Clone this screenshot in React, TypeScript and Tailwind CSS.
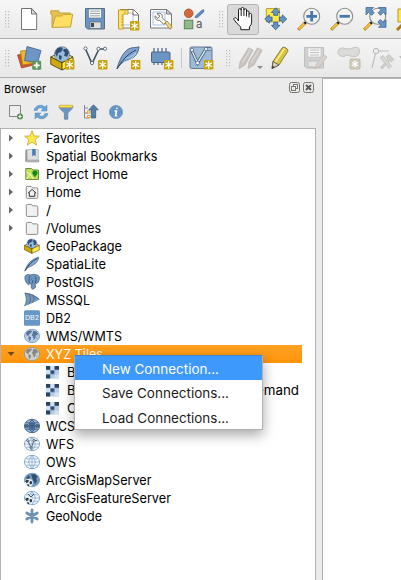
import React from "react";

type Kids = { children?: React.ReactNode };

function Tool({ children, className = "" }: Kids & { className?: string }) {
  return (
    <svg viewBox="0 0 24 24" className={`block h-6 w-6 shrink-0 overflow-visible ${className}`}>
      {children}
    </svg>
  );
}

function Small({ children, className = "" }: Kids & { className?: string }) {
  return (
    <svg viewBox="0 0 16 16" className={`block h-4 w-4 shrink-0 overflow-visible ${className}`} fill="none">
      {children}
    </svg>
  );
}

function Handle({ className = "" }: { className?: string }) {
  return (
    <svg viewBox="0 0 5 17" className={`h-[17px] w-[5px] shrink-0 ${className}`} fill="#bdbdbd">
      {[0, 3, 6, 9, 12, 15].map((y) => (
        <g key={y}>
          <rect x="0" y={y} width="1.2" height="1.3" />
          <rect x="3" y={y} width="1.2" height="1.3" />
        </g>
      ))}
    </svg>
  );
}

function NewBadge({ x, y }: { x: number; y: number }) {
  return (
    <g transform={`translate(${x} ${y})`}>
      <rect width="9.4" height="9.6" rx="1.2" fill="#c8a20a" />
      <path d="M4.7 1.4v6.8M1.8 3.1l5.8 3.4M7.6 3.1l-5.8 3.4" stroke="#fff" strokeWidth="1.2" strokeLinecap="round" />
    </g>
  );
}

function Magnifier({ children }: Kids) {
  return (
    <>
      <path d="M8 16 1.2 22.8" stroke="#a87b13" strokeWidth="3" />
      <path d="M7.6 16.4 1.8 22.2" stroke="#fcc93a" strokeWidth="1.7" />
      <path d="m7.4 16.6 1.8-1.8" stroke="#222" strokeWidth="2.6" />
      <circle cx="14.7" cy="9.3" r="8" fill="#f3f3f2" stroke="#8b8b88" strokeWidth="1.1" />
      {children}
    </>
  );
}

function Feather() {
  return (
    <>
      <path d="M1 22.5C3 15 7 6 13 2.7 17 1 20 2 23 .8c-.4 5-3 9.6-7.4 11.7-4 2-7.2 1.7-10.5 5.3z" fill="#7fa4cf" stroke="#34536e" strokeWidth=".8" />
      <path d="M1 23C5 16 11 8 20 4" fill="none" stroke="#29455e" strokeWidth="1" />
      <path d="M8 15.5c4-.5 9-3 12-8M10 12.5c4-1 7-3 10-6" fill="none" stroke="#c1d6ec" strokeWidth=".8" />
    </>
  );
}

function ThinFeather() {
  return (
    <>
      <path d="M1 14.8C2.4 9.5 6 3.5 14.8 1.2 14.4 6 10 9.4 4 11.4z" fill="#7fa4cf" stroke="#48698a" strokeWidth=".7" />
      <path d="M.8 15.2C3.6 9.6 8 5 13.6 2.2" stroke="#2b445c" strokeWidth=".9" />
    </>
  );
}

function Package() {
  return (
    <>
      <path d="M.8 11 12 5.6 23 11 12 17z" fill="#f9ec75" stroke="#4d4414" strokeWidth=".9" />
      <circle cx="12" cy="8.3" r="7.6" fill="#9abbdd" stroke="#466583" strokeWidth=".6" />
      <path d="M7 2.5 11 1l2 2-2 3-3 1-1 4-2-4zM14 3l3-.2 2 4-2 4-3-1 1-3-2-2zM9 9l3 1-1 4-2-1z" fill="#304e72" />
      <path d="m.8 11 11.2 5.8V24L.8 18.3z" fill="#d2a90a" stroke="#4d4414" strokeWidth=".9" />
      <path d="M12 16.8 23 11v7.5L12 24z" fill="#fbed46" stroke="#4d4414" strokeWidth=".9" />
    </>
  );
}

function Folder() {
  return (
    <path d="M2.3 13.4V3.4q0-1 1-1h4l1.4 1.5h4.1q1 0 1 1v8.5q0 1-1 1H3.3q-1 0-1-1z" fill="#f1f1f1" stroke="#8c8c8c" />
  );
}

type GlobeKind = "land" | "grey" | "dark" | "wfs" | "grid" | "arcmap" | "arcfeat";

function Globe({ kind }: { kind: GlobeKind }) {
  const land = kind === "land" || kind === "grey";
  const fill =
    kind === "grey" ? "#cfcfcb" : kind === "land" ? "#b4cce4" : kind === "dark" ? "#9bbce0" : kind === "arcmap" ? "#739ac5" : "#f6faff";
  const line = kind === "grey" ? "#8f918a" : kind === "dark" ? "#3a567a" : "#6c98c5";
  return (
    <>
      <ellipse cx="8" cy="8" rx="7.6" ry="6.7" fill={fill} stroke={line} strokeWidth=".8" />
      {land && (
        <g fill={kind === "grey" ? "#858984" : "#55759a"}>
          <path d="M2 5 4 3l3-.5 1 1.2L6.6 5 5.2 6.2 4.4 8 2.6 7.3zM4.4 8.2l2.7 1-.5 2.2-1 1.8-1-2zM9 3l3 .3 2 2.1-.8 2-1.3-.7-.6 3.2-1.3 2-1-3.2L7.8 7l1-1.5zM12.5 9l1.2 1-1 1z" />
        </g>
      )}
      {!land && kind !== "arcmap" && (
        <path
          d="M.6 8h14.8M2 4.8h12M2 11.2h12M8 1.4v13.2M8 1.4Q1.4 8 8 14.6M8 1.4Q14.6 8 8 14.6"
          stroke={line}
          strokeWidth="0.8"
          opacity={kind === "dark" ? 1 : 0.8}
        />
      )}
      {kind === "dark" && <path d="M5 5h6v6H5zM1 6h3v4H1zM12 6h3v4h-3z" fill="#2f4e76" opacity=".65" />}
      {kind === "wfs" && (
        <g stroke="#4f5c68" strokeWidth=".9" fill="#fff">
          <path d="m4 5 3.4 7 2.5-7.5H13" fill="none" />
          <circle cx="3.7" cy="4.6" r="1" />
          <circle cx="10" cy="4.4" r="1" />
          <circle cx="7.2" cy="12" r="1" />
        </g>
      )}
      {kind === "arcmap" && <path d="M7 2.5 11 2l3 3-2 1 1 3-2 3-2-4zM2 6l3-3 1 3-2 2z" fill="#34506f" />}
      {(kind === "arcmap" || kind === "arcfeat") && (
        <>
          <circle cx="4.8" cy="10.8" r="4" fill="#e4edf5" />
          <path d="m1 9 2-1.2 2 .8-1 2-1.6.4zM6 9l2 .5v2l-1.5 1-1-1.6zM3 12l2 .4.4 2-1.7-.5z" fill="#273746" />
          {kind === "arcfeat" && <path d="m4 4 3 3 3-3" stroke="#4f5c68" />}
        </>
      )}
    </>
  );
}

const rows: { label: string; width: number; arrow?: boolean; icon: React.ReactNode }[] = [
  { label: "Favorites", width: 54, arrow: true, icon: <path d="m8 .8 2 5.1 5.4.3-4.2 3.5 1.4 5.4L8 12.1l-4.7 3 1.5-5.4L.6 6.2 6 5.9z" fill="#fbe750" stroke="#c9a91b" strokeWidth=".8" /> },
  {
    label: "Spatial Bookmarks", width: 111.5, arrow: true,
    icon: (
      <>
        <path d="M1.3 2.3 3 1.2V14l-1.7-1z" fill="#969696" />
        <path d="M3.3 1.5h11v11.7h-11z" fill="#e0e1e2" stroke="#aaa" strokeWidth=".7" />
        <path d="M1.3 13 3 14h11.8v-2H3z" fill="#bbb" stroke="#888" strokeWidth=".5" />
        <path d="M8.2 1h3.5v7.6L10 7 8.2 8.6z" fill="#497eb3" />
      </>
    ),
  },
  {
    label: "Project Home", width: 82, arrow: true,
    icon: (
      <>
        <path d="M1.8 2.5h5.7L9 4h5.5v9.5H1.8z" fill="#bee15a" stroke="#71883e" />
        <path d="m2.3 6 4 2 3 5M2.3 13l4-5" stroke="#fff8c0" />
        <path d="M11 11.5c-1-2-3.4-3.6-2.6-5.4.9-2.2 4.4-2.2 5.2 0 .6 1.8-1.7 3.4-2.6 5.4z" fill="#118a21" />
      </>
    ),
  },
  {
    label: "Home", width: 35, arrow: true,
    icon: (
      <>
        <Folder />
        <path d="m4 9.2 4.1-3.8 4 3.8M5.3 8.6v3.7h5.5V8.6" stroke="#303030" />
      </>
    ),
  },
  { label: "/", width: 5, arrow: true, icon: <Folder /> },
  { label: "/Volumes", width: 55, arrow: true, icon: <Folder /> },
  { label: "GeoPackage", width: 76, icon: <g transform="translate(0 .5) scale(.665 .62)"><Package /></g> },
  { label: "SpatiaLite", width: 60, icon: <ThinFeather /> },
  {
    label: "PostGIS", width: 48,
    icon: (
      <>
        <path d="M1 3C2-.2 5 .4 6.5 1 9-.2 14 .2 15.3 3c.7 2-.8 5.4-2.3 6.5l-1.7-.7.1 4.7-2.4 1.8-1.7-1.2V10L5.7 9.5 4.6 11C2 9 .4 5.6 1 3z" fill="#6c96c0" stroke="#48627d" strokeWidth=".8" />
        <path d="M6.5 1.3C4.6 3 5 6 5.3 9M10.7 2c2 2 1.3 5.1.6 7M7 5l1 .2M7.5 9.8l1.3-1.2V6" stroke="#34516d" strokeWidth=".8" />
      </>
    ),
  },
  {
    label: "MSSQL", width: 44,
    icon: (
      <>
        <path d="M.8.8Q10 1 15.6 7.5 9 11 .5 14.2 4 8 .8.8z" fill="#7298be" />
        <path d="M.8.8Q4 8 .5 14.2M4.8 1.8Q8.5 7 4.5 12.5M9 3.4q2.5 3.7-.6 7.2M1 1Q9 2 15.4 7.4" stroke="#52677b" strokeWidth=".8" />
      </>
    ),
  },
  {
    label: "DB2", width: 25,
    icon: (
      <>
        <rect x="0" y=".3" width="16" height="15.4" rx="1.5" fill="#6797c7" />
        <text x="1" y="10.1" textLength="14" lengthAdjust="spacingAndGlyphs" fontSize="5.6" fontFamily="Inter, sans-serif" fill="#fff">DB2</text>
      </>
    ),
  },
  { label: "WMS/WMTS", width: 76, icon: <Globe kind="land" /> },
];

const lower: { label: string; width: number; icon: React.ReactNode }[] = [
  { label: "WCS", width: 29, icon: <Globe kind="dark" /> },
  { label: "WFS", width: 28, icon: <Globe kind="wfs" /> },
  { label: "OWS", width: 30, icon: <Globe kind="grid" /> },
  { label: "ArcGisMapServer", width: 105.5, icon: <Globe kind="arcmap" /> },
  { label: "ArcGisFeatureServer", width: 125, icon: <Globe kind="arcfeat" /> },
  { label: "GeoNode", width: 56, icon: <path d="M8 2v12M2.8 5l10.4 6M13.2 5 2.8 11" stroke="#6c91b4" strokeWidth="2.8" strokeLinecap="round" /> },
];

function Label({ text, width, color = "#000" }: { text: string; width: number; color?: string }) {
  return (
    <svg className="block h-[18px] shrink-0 overflow-visible" width={width} height="18">
      <text x="0" y="13.6" textLength={width} lengthAdjust="spacingAndGlyphs" fontSize="13" fontFamily="Inter, 'Liberation Sans', sans-serif" fill={color}>
        {text}
      </text>
    </svg>
  );
}

function TreeRow({ label, width, arrow, icon }: { label: string; width: number; arrow?: boolean; icon: React.ReactNode }) {
  return (
    <div className="flex h-[18px] items-center pl-[7px]">
      <svg className="mr-[10px] h-2 w-[6px] shrink-0" viewBox="0 0 6 8">{arrow && <path d="M1 .5v7L5 4z" fill="#686868" />}</svg>
      <Small className="mr-[6px]">{icon}</Small>
      <Label text={label} width={width} />
    </div>
  );
}

function TileRow({ label, width, children }: Kids & { label: string; width: number }) {
  return (
    <div className="flex h-[18px] items-center pl-[44px]">
      <Small className="mr-[6px]">
        <path d="M1 2h13v12.5H1z" fill="#b4cbe6" />
        <path d="M5 2h4.5v4H5zM1 6h4v4H1zM9.5 10.5H14v4H9.5z" fill="#d4e0ef" />
        <path d="M5.2 6h4.4v4.4H5.2z" fill="#6088b4" />
        <path d="M1 2h4.2v3.8H1zM9.6 2H14v3.8H9.6zM1 10.6h4.2v3.9H1zM6.2 7h2.5v2.5H6.2z" fill="#2b435c" />
      </Small>
      <Label text={label} width={width} />
      {children}
    </div>
  );
}

function FileToolbar() {
  return (
    <div className="flex h-[39px] shrink-0 items-center overflow-hidden border-b border-[#aeaeae] bg-linear-to-b from-[#f7f7f7] to-[#e9e9e9]">
      <Handle className="ml-[5px]" />
      <Tool className="ml-[7px]">
        <path d="M4.5 1.5h10.2l5 5.5v15.5H4.5z" fill="#fff" stroke="#73736f" />
        <path d="M14.5 1.5V7h5z" fill="#ddd" stroke="#73736f" />
      </Tool>
      <Tool className="ml-[9px]">
        <path d="M2 20.5V7H.8V3.8h8V6h11.5v3" fill="#e7c34d" stroke="#c6a13c" />
        <path d="M2.2 20.5 5.5 9h6l2-1.7h9.2L20.5 20z" fill="#ffdf61" stroke="#c6a13c" />
      </Tool>
      <Tool className="ml-[9px]">
        <path d="M2.5 1.5h19V22h-17l-2-2z" fill="#6a95c3" stroke="#596f86" />
        <path d="M5.5 2h13v9h-13z" fill="#f6f6f4" stroke="#596f86" strokeWidth=".6" />
        <path d="M7 4.2h10M7 6.5h10M7 8.8h10" stroke="#91918c" strokeWidth=".8" />
        <path d="M7 15h11v6.5H7z" fill="#dededb" stroke="#50606c" strokeWidth=".6" />
        <path d="M8 16h3v4H8z" fill="#394a5b" />
      </Tool>
      <Tool className="ml-[10px]">
        <path d="M3.5 2.5h13l5 5V21h-18z" fill="#fff" stroke="#777" />
        <path d="M6 6h10v12H6" fill="none" stroke="#a9bfea" />
        <path d="M16 2.5V8h5" fill="none" stroke="#777" />
        <path d="M1.5 3H11v4H6v15H1.5z" fill="#ffe579" stroke="#c49e1b" />
        <path d="M4 9h2M4 12h2M4 15h2M4 18h2M8 4v2" stroke="#c49e1b" />
        <NewBadge x={13} y={14} />
      </Tool>
      <Tool className="ml-2">
        <path d="M1.5 2.5h16l5 4.5v14h-21z" fill="#fff" stroke="#777" />
        <path d="M4 5h12v13H4z" fill="#fbfdff" stroke="#aabfe8" />
        <path d="M17.5 2.5V7h5z" fill="#d5d5d2" stroke="#777" />
        <path d="M8 6.8c3-1.8 6 .6 5.3 4l4 4-2.6 2.6-4.1-4.1c-3 .5-5.1-1.8-4.5-4.5l2.6 2.5 2.3-2.2z" fill="#f4f4f1" stroke="#656560" strokeWidth=".9" />
        <path d="m16 16 2-2 5 5.4-2 3z" fill="#eed481" stroke="#9a7d30" strokeWidth=".8" />
      </Tool>
      <Tool className="ml-2">
        <circle cx="7.7" cy="6.3" r="4.3" fill="#d2683b" stroke="#a54a24" strokeWidth=".8" />
        <path d="m14.5 9 5.8-5.2Q22 2.2 23 3l-.3 1.9-5.8 5.3-2.7.5z" fill="#6390c0" stroke="#476889" strokeWidth=".7" />
        <rect x="3.3" y="13.2" width="8.5" height="8.6" fill="#91b98b" stroke="#557d52" strokeWidth=".9" />
        <text x="15" y="21.2" fontSize="11.5" fontFamily="Inter, sans-serif" fill="#555">a</text>
      </Tool>
      <Handle className="ml-[14px]" />
      <div className="ml-[3px] flex h-[31px] w-[32px] shrink-0 items-center justify-center rounded-[3px] border border-[#b4b4b4] bg-[#d9d9d9]">
        <Tool>
          <path d="M7.5 14V3.2q0-1.6 1.3-1.6T10.2 3v6-7.2Q10.2.5 11.5.5t1.4 1.3V9 3q0-1.2 1.3-1.2T15.5 3v6.5V5q0-1.1 1.2-1.1T18 5v5.5-3q0-1 1.3-1t1.3 1v7.7q0 2.7-2.2 4.7v2.8H9.8v-2.6L5.6 16 3 12.5q-.5-1.3.6-1.8 1-.4 1.9.6z" fill="#fff" />
          <path d="M7.5 14V3.2q0-1.6 1.3-1.6T10.2 3v6M10.2 3V1.8Q10.2.5 11.5.5t1.4 1.3V9M12.9 3q0-1.2 1.3-1.2T15.5 3v6.5M15.5 5q0-1.1 1.2-1.1T18 5v5.5M18 7.5q0-1 1.3-1t1.3 1v7.7q0 2.7-2.2 4.7v2.8H9.8v-2.6L5.6 16 3 12.5q-.5-1.3.6-1.8 1-.4 1.9.6l2 2.7" fill="none" stroke="#151515" strokeWidth=".95" strokeLinejoin="round" />
        </Tool>
      </div>
      <Tool className="ml-[5px]">
        <path d="M2.3 1.6h13v13.2h-13z" fill="#ffe84c" stroke="#a58717" strokeWidth=".8" />
        <path d="m11.7.8 4.3 4.7h-2.3v2.8h-4V5.5H7.4zM11.7 22.8l-4.3-4.5h2.3v-2.8h4v2.8H16zM.8 12l4.5-4.2v2.3h2.8v3.9H5.3v2.2zM22.8 12l-4.5-4.2v2.3h-2.8v3.9h2.8v2.2z" fill="#6795c6" stroke="#315d89" strokeWidth=".8" />
      </Tool>
      <Tool className="ml-[9px]"><Magnifier><path d="M14.7 4v10.6M9.4 9.3H20" stroke="#4479ad" strokeWidth="2.8" /></Magnifier></Tool>
      <Tool className="ml-[9px]"><Magnifier><path d="M9.5 9.3h10.4" stroke="#4479ad" strokeWidth="2.8" /></Magnifier></Tool>
      <Tool className="ml-[9px]">
        <Magnifier>
          <g fill="#6894c2" stroke="#345f89" strokeWidth=".7">
            <path d="M3 .5h7.5L8.2 2.8l3 3-2.5 2.5-3-3L3 8zM23 .5v7.5l-2.5-2.7-3 3L15 5.8l3-3L15.5.5zM23 20.3h-7.5l2.3-2.3-3-3 2.5-2.5 3 3 2.7-2.7z" />
          </g>
        </Magnifier>
      </Tool>
      <Tool className="ml-[9px]"><path d="M2 2h18v13H2z" fill="#ffe84c" stroke="#b29824" /><path d="m8 16-7 7" stroke="#a87b13" strokeWidth="3" /></Tool>
    </div>
  );
}

function LayerToolbar() {
  return (
    <div className="flex h-[39px] shrink-0 items-center overflow-hidden border-b border-[#aeaeae] bg-linear-to-b from-[#f5f5f5] to-[#e8e8e8]">
      <Handle className="ml-[5px]" />
      <Tool className="ml-[7px]">
        <path d="m.5 9 12-3 4 13-12 3z" fill="#cf582f" stroke="#934324" strokeWidth=".7" />
        <path d="m3.5 5 13-1 1 13-12 2z" fill="#edb82e" stroke="#a37512" strokeWidth=".7" />
        <path d="m10 .5 14 4-3.4 12.5-13-2.5z" fill="#6d96c6" stroke="#3f6286" strokeWidth=".8" />
        <rect x="15.2" y="14.8" width="9" height="9" rx="1.3" fill="#5d965b" />
        <path d="M19.7 16.3v6M16.7 19.3h6" stroke="#fff" strokeWidth="1.8" />
      </Tool>
      <Tool className="ml-[9px]"><Package /><NewBadge x={15} y={14} /></Tool>
      <Tool className="ml-[9px]">
        <path d="m2.5 3 6.5 14.5L16 3h5" stroke="#415466" strokeWidth="1.6" fill="none" />
        <g fill="#fff" stroke="#415466" strokeWidth=".8"><circle cx="2.5" cy="2.5" r="1.6" /><circle cx="9" cy="17" r="1.6" /><circle cx="15.5" cy="2.8" r="1.6" /><circle cx="22" cy="2.8" r="1.6" /></g>
        <NewBadge x={15} y={14} />
      </Tool>
      <Tool className="ml-[9px]"><Feather /><NewBadge x={15} y={14} /></Tool>
      <Tool className="ml-[9px]">
        <path d="M5 2v17M9 2v17M13 2v17M17 2v17" stroke="#446283" strokeWidth="1.2" />
        <rect x="2.5" y="6" width="18.5" height="10.5" rx="1" fill="#6a95c5" stroke="#486483" />
        <NewBadge x={15} y={14} />
      </Tool>
      <div className="ml-2 h-5 w-px shrink-0 bg-[#c7c7c7]" />
      <Tool className="ml-[7px]">
        <rect x="1" y="1" width="22" height="21.5" rx="1.5" fill="#9eb9d5" stroke="#667b91" />
        <path d="m3 5 5.5 12L17 3h5" stroke="#38526d" strokeWidth="3" fill="none" />
        <path d="m3 5 5.5 12L17 3h5" stroke="#d7e5f2" strokeWidth="1.5" fill="none" />
        <g fill="#fff" stroke="#49647d" strokeWidth=".7"><circle cx="3" cy="4" r="1.6" /><circle cx="8.5" cy="17" r="1.8" /><circle cx="17" cy="3" r="1.6" /></g>
        <NewBadge x={15} y={14} />
      </Tool>
      <Handle className="ml-[13px]" />
      <Tool className="ml-[8px]">
        <g fill="#c9c5c2" stroke="#b4b0ad" strokeWidth=".7">
          <path d="m0 22.5 1-6.5L9.5 1.8l4.6 2.4L6 19zM9 22.5l1-6.5 8.5-14.2 4.6 2.4L15 19z" />
          <path d="m3.2 17 8.2-13.5M12.2 17l8.2-13.5" stroke="#dedad7" strokeWidth="1.2" />
        </g>
        <path d="M18 20h6l-3 3z" fill="#8f8f8f" />
      </Tool>
      <Tool className="ml-[6px]">
        <path d="m3 22.5 1-7L13 2q1-1.5 3-.5l2 1.3q1.5 1.2.7 2.7L10 19z" fill="#d8c43d" stroke="#766b32" strokeWidth=".8" />
        <path d="M6.5 16l9-13.5" stroke="#fff08f" strokeWidth="1.4" />
        <path d="m4 15.5 6 3.5-7 3.5z" fill="#d7d3be" stroke="#4f4b3f" strokeWidth=".8" />
        <path d="M3.3 19.7 6 21.2 3 22.5z" fill="#363636" />
      </Tool>
      <Tool className="ml-[10px] opacity-40">
        <path d="M1.5 1.5h19V22h-17l-2-2z" fill="#a6a6a6" stroke="#777" />
        <path d="M5 2h13v9H5z" fill="#fff" stroke="#777" strokeWidth=".6" />
        <path d="M7 4h9M7 6.5h9M7 9h9M6 15h10v6H6" stroke="#777" fill="#ddd" />
        <path d="m12 23 2-6 7-8 3 2-7 9z" fill="#bda79a" stroke="#927d70" />
      </Tool>
      <Tool className="ml-[10px]">
        <path d="M2 3.5q3-3 7-.8 4.5 1.2 8-1.2 5-1 5.5 2.8 0 6.2-5.5 6.4-4-.4-7-1.7-3 2.6-7 .8Q-.6 6.8 2 3.5z" fill="#dbdcd9" stroke="#c3c4c0" />
        <rect x="13" y="13" width="10" height="10" rx="1" fill="#cfccbb" stroke="#bebba9" />
        <path d="M18 14.5v7M15 16.2l6 3.6M21 16.2l-6 3.6" stroke="#fff" strokeWidth="1.3" />
      </Tool>
      <Tool className="ml-[10px] opacity-55">
        <path d="m1 22 4-17h13" fill="none" stroke="#999" strokeWidth="1.2" />
        <circle cx="5" cy="5" r="2.7" fill="#eee" stroke="#888" />
        <path d="m9.5 21.5 7.5-8-2-2.5 3-2.5 5 5-3 2.5-1.7-1.5-7 8.5z" fill="#b5b5b5" stroke="#999" strokeWidth=".7" />
        <path d="m9 11.5 3-2L20.5 20 18 22.5z" fill="#c8c2b8" stroke="#999" strokeWidth=".7" />
      </Tool>
      <svg className="ml-1 h-2 w-[6px] shrink-0" viewBox="0 0 6 8"><path d="M0 2h6L3 6z" fill="#bbb" /></svg>
    </div>
  );
}

function BrowserHeader() {
  return (
    <div className="h-[50px] shrink-0">
      <div className="flex h-[19px] items-center justify-between pl-1 pr-[2px]">
        <svg className="h-[18px] w-[42px] overflow-visible"><text x="0" y="13.8" fontSize="11" fontFamily="Inter, sans-serif" textLength="42" lengthAdjust="spacingAndGlyphs">Browser</text></svg>
        <div className="flex gap-[3px]">
          <svg className="h-[11px] w-[11px]" viewBox="0 0 11 11" fill="none" stroke="#777770"><rect x=".5" y=".5" width="10" height="10" rx="2" /><rect x="4.5" y="2.5" width="4" height="4" /><rect x="2.5" y="4.5" width="4" height="4" fill="#ebebeb" /></svg>
          <svg className="h-[11px] w-[11px]" viewBox="0 0 11 11" fill="none" stroke="#777770"><rect x=".5" y=".5" width="10" height="10" rx="2" /><path d="m3 3 5 5M8 3 3 8" stroke="#555550" strokeWidth="1.8" /></svg>
        </div>
      </div>
      <div className="flex items-center gap-[9px] pl-2 pt-[7px]">
        <Small><path d="M1.5 1.5h11v11h-11z" fill="#eee" stroke="#858585" /><circle cx="12" cy="12.5" r="3" fill="#538b51" /><path d="M12 10.8v3.4M10.3 12.5h3.4" stroke="#fff" strokeWidth="1.2" /></Small>
        <Small><path d="M1 6.5C2 1.5 8-.5 12 3l2-2v6H8l2-2C7.5 3 5 3.5 4.2 6.5zM15 9.5C14 14.5 8 16.5 4 13l-2 2V9h6l-2 2c2.5 2 5 1.5 5.8-1.5z" fill="#6aa0d4" stroke="#548abd" strokeWidth=".5" /></Small>
        <Small><path d="M1.3 2h13.4v2L9.8 9v6.2H6.4V9L1.3 4z" fill="#6b96c2" stroke="#527da8" strokeWidth=".7" /><path d="M1.3 1.3h13.4v2.2H1.3z" fill="#ffe54d" stroke="#c1a529" strokeWidth=".6" /></Small>
        <Small><path d="M1.5 1v13h5M1.5 4H5M1.5 9H5" stroke="#888" /><path d="M4.5 7h2.6v2H4.5zM4.5 11.5h2.6v2H4.5z" fill="#fff" stroke="#f39b2d" /><path d="m10.5.8 4.8 5h-2.6V14H8.3V5.8H5.8z" fill="#527ea8" stroke="#315b82" strokeWidth=".7" /></Small>
        <Small><circle cx="8" cy="8" r="6.6" fill="#6493c3" stroke="#7ba3cf" /><path d="M9 3.6 8.7 5M6.6 7h1.9l-1 4.8h1.8" stroke="#fff" strokeWidth="1.5" /></Small>
      </div>
    </div>
  );
}

export default function App() {
  return (
    <div className="relative flex h-[580px] w-[401px] flex-col overflow-hidden bg-[#ebebeb]">
      <FileToolbar />
      <LayerToolbar />
      <div className="flex min-h-0 flex-1">
        <div className="flex w-[316px] shrink-0 flex-col">
          <BrowserHeader />
          <div className="min-h-0 flex-1 border border-b-0 border-[#b2b2b2] bg-white">
            {rows.map((row) => <TreeRow key={row.label} {...row} />)}
            <div className="flex h-[18px] w-[301px] items-center bg-linear-to-b from-[#ffa122] to-[#ff9408] pl-[6px]">
              <svg className="mr-[9px] h-2 w-2 shrink-0" viewBox="0 0 8 8"><path d="M.5 2h7L4 6z" fill="#744b12" /></svg>
              <Small className="mr-[6px]"><Globe kind="grey" /></Small>
              <Label text="XYZ Tiles" width={57} color="#fff" />
            </div>
            <TileRow label="B" width={8.5} />
            <TileRow label="B" width={8.5}>
              <div className="ml-[180px]"><Label text="emand" width={43} /></div>
            </TileRow>
            <TileRow label="O" width={10} />
            {lower.map((row) => <TreeRow key={row.label} {...row} />)}
          </div>
        </div>
        <div className="ml-[6px] flex-1 border-l border-t border-[#b2b2b2] bg-white" />
      </div>

      <div className="absolute left-[74px] top-[355px] w-[189px] border border-[#b0b0b0] border-t-[#4383c8] bg-white shadow-[0_5px_12px_rgba(0,0,0,0.35)]">
        <div className="flex h-6 items-center bg-[#3d99fc] pl-[27px] pt-px"><Label text="New Connection..." width={117} color="#fff" /></div>
        <div className="flex h-[25px] items-center pl-[27px]"><Label text="Save Connections..." width={127} color="#1c1c1c" /></div>
        <div className="flex h-[24px] items-center pl-[27px] pt-px"><Label text="Load Connections..." width={127} color="#1c1c1c" /></div>
      </div>
    </div>
  );
}
